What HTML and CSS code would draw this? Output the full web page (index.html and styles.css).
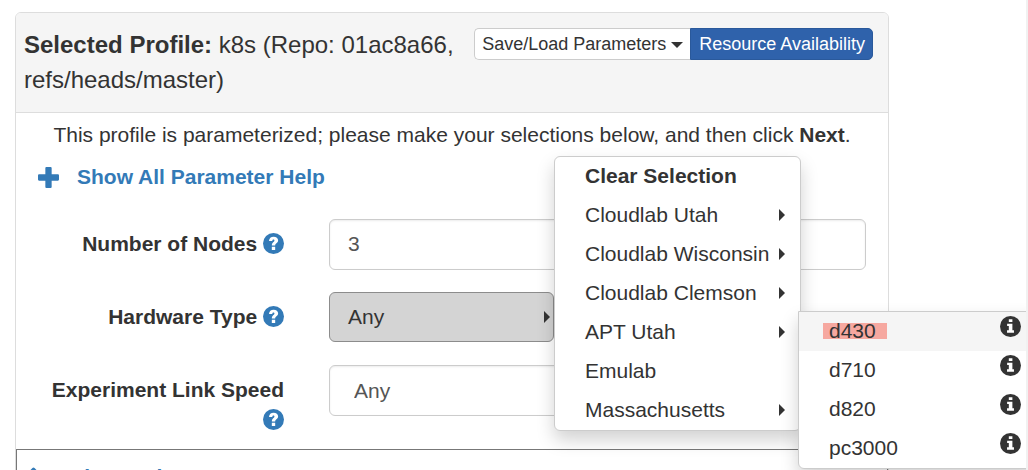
FILE: index.html
```
<!DOCTYPE html>
<html lang="en">
<head>
<meta charset="utf-8">
<title>Profile Parameters</title>
<link rel="stylesheet" href="styles.css">
</head>
<body>
<svg class="sprite" aria-hidden="true">
  <symbol id="question" viewBox="0 0 20 20">
    <circle cx="10" cy="10" r="10" fill="currentColor"/>
    <path d="M5.700 7.600C5.900 4.900 7.500 3.500 10.100 3.500c2.600 0 4.300 1.400 4.300 3.500 0 2.700-2.600 2.700-2.800 4.800H8.400c0-3 2.500-3.300 2.500-4.700 0-.6-.4-1-1-1-.7 0-1 .6-1.100 1.500zM8.400 13h3.200v3.300H8.400z" fill="#fff"/>
  </symbol>
  <symbol id="info" viewBox="0 0 20 20">
    <circle cx="10" cy="10" r="10" fill="currentColor"/>
    <path d="M8.400 3h3.400v2.600H8.400zM6.800 7.300h5v6.300h1.500v2.400H6.700v-2.400h1.700V9.600H6.800z" fill="#fff"/>
  </symbol>
</svg>
<div class="page">
<main class="panel">
  <header class="panel-heading">
    <h1 class="title"><strong>Selected Profile:</strong> k8s (Repo: 01ac8a66, refs/heads/master)</h1>
    <div class="btn-group">
      <button type="button" class="btn btn-default">Save/Load Parameters <span class="caret-down"></span></button>
      <button type="button" class="btn btn-primary">Resource Availability</button>
    </div>
  </header>
  <form class="panel-body">
    <p class="intro">This profile is parameterized; please make your selections below, and then click <strong>Next</strong>.</p>
    <a class="help-toggle" href="#help">
      <svg class="plus" viewBox="0 0 20 20"><path d="M7 1q0-1 1-1h4q1 0 1 1v6h6q1 0 1 1v4q0 1-1 1h-6v6q0 1-1 1H8q-1 0-1-1v-6H1q-1 0-1-1V8q0-1 1-1h6z" fill="currentColor"/></svg>
      <span>Show All Parameter Help</span>
    </a>
    <div class="row">
      <div class="label"><label for="nodes">Number of Nodes</label> <a class="help" href="#nodes-help" aria-label="Help"><svg class="icon"><use href="#question"/></svg></a></div>
      <input class="control" id="nodes" type="text" value="3">
    </div>
    <div class="row">
      <div class="label"><label for="hardware">Hardware Type</label> <a class="help" href="#hardware-help" aria-label="Help"><svg class="icon"><use href="#question"/></svg></a></div>
      <div class="dropdown">
        <button type="button" class="picker" id="hardware">Any <span class="caret-right"></span></button>
        <ul class="menu">
          <li><button type="button" class="item"><strong>Clear Selection</strong></button></li>
          <li><button type="button" class="item">Cloudlab Utah <span class="caret-right"></span></button></li>
          <li><button type="button" class="item">Cloudlab Wisconsin <span class="caret-right"></span></button></li>
          <li><button type="button" class="item">Cloudlab Clemson <span class="caret-right"></span></button></li>
          <li class="parent"><button type="button" class="item">APT Utah <span class="caret-right"></span></button>
            <ul class="menu submenu">
              <li><button type="button" class="item active"><span class="marked">d430</span> <svg class="icon"><use href="#info"/></svg></button></li>
              <li><button type="button" class="item">d710 <svg class="icon"><use href="#info"/></svg></button></li>
              <li><button type="button" class="item">d820 <svg class="icon"><use href="#info"/></svg></button></li>
              <li><button type="button" class="item">pc3000 <svg class="icon"><use href="#info"/></svg></button></li>
            </ul>
          </li>
          <li><button type="button" class="item">Emulab</button></li>
          <li><button type="button" class="item">Massachusetts <span class="caret-right"></span></button></li>
        </ul>
      </div>
    </div>
    <div class="row">
      <div class="label"><label for="speed">Experiment Link Speed</label> <a class="help" href="#speed-help" aria-label="Help"><svg class="icon"><use href="#question"/></svg></a></div>
      <select class="control speed" id="speed"><option>Any</option></select>
    </div>
  </form>
  <section class="advanced">
    <a class="help-toggle" href="#advanced">
      <svg class="plus" viewBox="0 0 20 20"><path d="M9 1q1-1 2 0l9 9-3 3-7-7-7 7-3-3z" fill="currentColor"/></svg>
      <span>Advanced</span>
    </a>
  </section>
</main>
</div>
</body>
</html>
```
FILE: styles.css
```
* { box-sizing: border-box; }
body {
  margin: 0;
  background: #fff;
  color: #333;
  font: 21px/30px "Liberation Sans", Arial, sans-serif;
}
button, input, select { font: inherit; color: inherit; margin: 0; }
a { color: #337ab7; text-decoration: none; }
.sprite { position: absolute; width: 0; height: 0; }
.page {
  height: 100vh;
  overflow: hidden;
  padding: 12px 137px 0 15px;
  border-right: 2px solid #f1f1f1;
}
.panel { border: 1px solid #ddd; border-radius: 6px; }
.panel-heading {
  display: flex;
  align-items: flex-start;
  gap: 16px;
  padding: 14px 15px 15px 8px;
  background: #f5f5f5;
  border-bottom: 1px solid #ddd;
  border-radius: 5px 5px 0 0;
}
.title { flex: 1; margin: 0; font-size: 24px; line-height: 35px; font-weight: normal; }
.btn-group { display: flex; flex: none; padding-top: 1px; }
.btn {
  height: 32px;
  padding: 0 7px;
  border: 1px solid #ccc;
  font-size: 18px;
  line-height: 30px;
  white-space: nowrap;
}
.btn-default { background: #fff; border-right: 0; border-radius: 5px 0 0 5px; }
.btn-primary { padding-left: 8px; background: #2f62ab; border-color: #2a599b; color: #fff; border-radius: 0 5px 5px 0; }
.caret-down {
  display: inline-block;
  border: 6px solid transparent;
  border-top-color: currentColor;
  border-bottom: 0;
  vertical-align: middle;
}
.caret-right {
  display: inline-block;
  border: 6px solid transparent;
  border-left-color: currentColor;
  border-right: 0;
}
.panel-body { padding: 7px 22px 14px; }
.intro { margin: 0; text-align: center; }
.help-toggle { display: flex; align-items: center; gap: 18px; margin-top: 12px; font-weight: bold; }
.plus { width: 21px; height: 21px; }
.row { display: grid; grid-template-columns: 246px 1fr; column-gap: 45px; margin-top: 22px; min-height: 51px; }
.help-toggle + .row { margin-top: 27px; }
.label { padding-top: 10px; text-align: right; font-weight: bold; line-height: 30px; }
.icon { width: 21px; height: 21px; flex: none; }
.help .icon { display: inline-block; vertical-align: -3px; }
.control {
  width: 100%;
  height: 51px;
  padding: 0 18px 2px;
  border: 1px solid #ccc;
  border-radius: 6px;
  background: #fff;
  box-shadow: inset 0 1px 2px rgba(0, 0, 0, .08);
  color: #555;
}
.speed { appearance: none; padding: 0 24px; }
.dropdown { position: relative; }
.picker {
  display: flex;
  align-items: center;
  justify-content: space-between;
  width: 225px;
  height: 50px;
  padding: 0 3px 0 18px;
  border: 1px solid #8c8c8c;
  border-radius: 6px;
  background: #d4d4d4;
}
.menu {
  position: absolute;
  z-index: 2;
  left: 225px;
  top: -136px;
  width: 247px;
  margin: 0;
  padding: 0;
  list-style: none;
  border: 1px solid #ccc;
  border-radius: 6px;
  background: #fff;
  box-shadow: 0 9px 18px rgba(0, 0, 0, .18);
}
.item {
  display: flex;
  align-items: center;
  justify-content: space-between;
  width: 100%;
  height: 39px;
  padding: 0 15px 2px 30px;
  border: 0;
  background: none;
  text-align: left;
}
.parent { position: relative; }
.submenu { left: 243px; top: -2px; width: 240px; border-radius: 0 6px 6px 6px; }
.submenu .item { padding-right: 16px; }
.submenu .icon { color: #333; margin-bottom: 8px; }
.active { background: #f5f5f5; }
.marked { margin-left: -6px; padding: 0 11px 0 6px; line-height: 16px; background: #f6a8a0; }
.advanced { border: 1px solid #777; padding: 0 6px 12px; }
```
